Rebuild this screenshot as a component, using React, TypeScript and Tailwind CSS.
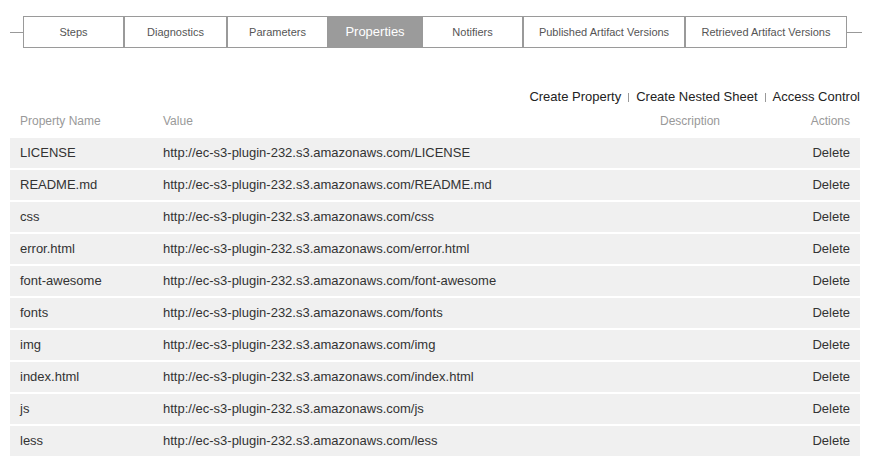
const tabs = [
  { label: "Steps", w: "w-[101px]" },
  { label: "Diagnostics", w: "w-[103px]" },
  { label: "Parameters", w: "w-[101px]" },
  { label: "Properties", w: "w-[94px]", active: true },
  { label: "Notifiers", w: "w-[101px]" },
  { label: "Published Artifact Versions", w: "w-[162px]" },
  { label: "Retrieved Artifact Versions", w: "w-[162px]" },
]

const props = [
  "LICENSE",
  "README.md",
  "css",
  "error.html",
  "font-awesome",
  "fonts",
  "img",
  "index.html",
  "js",
  "less",
]

export default function App() {
  return (
    <div className="h-[456px] w-[875px] overflow-hidden bg-white font-['Liberation_Sans',Arial,sans-serif]">
      {/* tab strip */}
      <div className="mt-4 flex items-center pl-[10px]">
        <div className="h-px w-[13px] bg-[#999]" />
        <div className="flex">
          {tabs.map((t) => (
            <div
              key={t.label}
              className={`flex h-8 items-center justify-center border border-[#9a9a9a] ${t.w} ${
                t.active ? "bg-[#9b9b9b] text-[13px] text-white" : "bg-white text-[11px] text-[#555]"
              }`}
            >
              {t.label}
            </div>
          ))}
        </div>
        <div className="h-px w-[15px] bg-[#999]" />
      </div>

      {/* actions */}
      <div className="mt-[41px] flex items-center justify-end pr-[15px] text-[13px] leading-4 text-[#222]">
        <span>Create Property</span>
        <span className="mx-[7px] h-[9px] w-px bg-[#999]" />
        <span>Create Nested Sheet</span>
        <span className="mx-[7px] h-[9px] w-px bg-[#999]" />
        <span>Access Control</span>
      </div>

      {/* table */}
      <div className="ml-[10px] mr-[15px] mt-[6px]">
        <div className="grid h-5 grid-cols-[153px_497px_1fr_auto] items-center text-[12px] text-[#999]">
          <div className="pl-[10px]">Property Name</div>
          <div>Value</div>
          <div>Description</div>
          <div className="pr-[10px] text-right">Actions</div>
        </div>
        <div className="mt-[7px] flex flex-col gap-[2px]">
          {props.map((p) => (
            <div
              key={p}
              className="grid h-[30px] grid-cols-[153px_497px_1fr_auto] items-center bg-[#f0f0f0] text-[13px] text-[#333]"
            >
              <div className="pl-[10px]">{p}</div>
              <div>http://ec-s3-plugin-232.s3.amazonaws.com/{p}</div>
              <div />
              <div className="pr-[10px] text-right">Delete</div>
            </div>
          ))}
        </div>
      </div>
    </div>
  )
}
